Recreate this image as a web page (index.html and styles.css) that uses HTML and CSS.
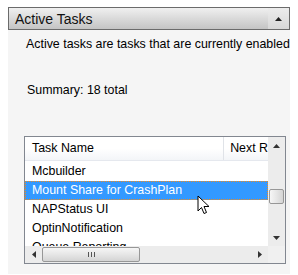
FILE: index.html
```html
<!DOCTYPE html>
<html>
<head>
  <meta charset="UTF-8">
  <title>Active Tasks</title>
  <link rel="stylesheet" href="styles.css">
</head>
<body>
  <div class="pane">
    <div class="pane-header">
      <span class="pane-title">Active Tasks</span>
      <span class="collapse">
        <svg width="7" height="4" viewBox="0 0 7 4"><path d="M0 4 L3.5 0 L7 4 Z" fill="#222"/></svg>
      </span>
    </div>
    <div class="pane-body">
      <p class="desc">Active tasks are tasks that are currently enabled</p>
      <p class="summary">Summary: 18 total</p>

      <div class="listview">
        <div class="list-main">
          <div class="list-area">
            <div class="col-header">
              <div class="col col-name">Task Name</div>
              <div class="col col-next">Next R</div>
            </div>
            <div class="rows">
              <div class="row">Mcbuilder</div>
              <div class="row selected">Mount Share for CrashPlan</div>
              <div class="row">NAPStatus UI</div>
              <div class="row">OptinNotification</div>
              <div class="row">Queue Reporting</div>
            </div>
          </div>
          <div class="vscroll">
            <div class="arrow">
              <svg width="7" height="4" viewBox="0 0 7 4"><path d="M0 4 L3.5 0 L7 4 Z" fill="#333"/></svg>
            </div>
            <div class="vtrack">
              <div class="vthumb"></div>
            </div>
            <div class="arrow">
              <svg width="7" height="4" viewBox="0 0 7 4"><path d="M0 0 L3.5 4 L7 0 Z" fill="#333"/></svg>
            </div>
          </div>
        </div>
        <div class="hscroll">
          <div class="harrow">
            <svg width="4" height="7" viewBox="0 0 4 7"><path d="M4 0 L0 3.5 L4 7 Z" fill="#333"/></svg>
          </div>
          <div class="htrack">
            <div class="hthumb"><span class="grip"></span></div>
          </div>
          <div class="harrow">
            <svg width="4" height="7" viewBox="0 0 4 7"><path d="M0 0 L4 3.5 L0 7 Z" fill="#333"/></svg>
          </div>
          <div class="corner"></div>
        </div>
      </div>
    </div>
  </div>

  <svg class="cursor" width="14" height="21" viewBox="0 0 14 21">
    <path d="M1 1 L1 16 L4.5 12.5 L7 18.5 L9.5 17.5 L7 11.5 L12 11.5 Z" fill="#fff" stroke="#000" stroke-width="1" stroke-linejoin="miter"/>
  </svg>
</body>
</html>
```

FILE: styles.css
```css
body {
  margin: 0;
  background-color: #fff;
  font-family: "Liberation Sans", Arial, sans-serif;
  font-size: 12.4px;
  color: #000;
}
.pane {
  margin: 7px 8px 0 8px;
  width: 282px;
}
.pane-header {
  height: 21px;
  border: 1px solid #6b6b6b;
  background: linear-gradient(to bottom, #f0f0f0 0%, #dcdcdc 45%, #c4c4c4 100%);
  display: flex;
  align-items: center;
  justify-content: space-between;
}
.pane-title {
  padding-left: 6px;
  font-size: 14px;
  color: #111;
}
.collapse {
  width: 21px;
  height: 21px;
  display: flex;
  align-items: center;
  justify-content: center;
  background: linear-gradient(to bottom, #ececec 0%, #d8d8d8 100%);
}
.pane-body {
  background-color: #f5f5f5;
  padding: 6px 5px 2px 16px;
  height: 236px;
}
.desc {
  margin: 0;
  padding-left: 2px;
  line-height: 17px;
  white-space: nowrap;
}
.summary {
  margin: 29px 0 0 0;
  padding-left: 3px;
  line-height: 17px;
}
.listview {
  margin-top: 37px;
  width: 260px;
  border: 1px solid #828790;
  background-color: #fff;
}
.list-main {
  display: flex;
  height: 109px;
}
.list-area {
  flex: 1;
  overflow: hidden;
}
.col-header {
  display: flex;
  height: 23px;
  background: linear-gradient(to bottom, #fff 0%, #fff 50%, #f3f5f8 100%);
  border-bottom: 1px solid #e5e8ee;
}
.col {
  line-height: 23px;
  white-space: nowrap;
}
.col-name {
  width: 194px;
  padding-left: 7px;
  border-right: 1px solid #e0e3e8;
}
.col-next {
  padding-left: 6px;
}
.rows {
  padding-top: 1px;
}
.row {
  height: 19px;
  line-height: 19px;
  padding-left: 7px;
  white-space: nowrap;
  box-sizing: border-box;
}
.row.selected {
  background-color: #3399ff;
  color: #fff;
  border: 1px dotted #f08a1c;
  padding-left: 6px;
  line-height: 17px;
  width: 243px;
}
.vscroll {
  width: 17px;
  background-color: #ececec;
  display: flex;
  flex-direction: column;
}
.arrow {
  height: 17px;
  display: flex;
  align-items: center;
  justify-content: center;
}
.vtrack {
  flex: 1;
  padding-top: 35px;
}
.vthumb {
  margin: 0 1px;
  height: 13px;
  border: 1px solid #979797;
  border-radius: 2px;
  background: linear-gradient(to right, #f6f6f6 0%, #e6e6e6 50%, #d4d4d4 100%);
}
.hscroll {
  display: flex;
  height: 17px;
  background-color: #ececec;
}
.harrow {
  width: 17px;
  display: flex;
  align-items: center;
  justify-content: center;
}
.htrack {
  flex: 1;
  padding-top: 1px;
}
.hthumb {
  width: 96px;
  height: 13px;
  border: 1px solid #979797;
  border-radius: 2px;
  background: linear-gradient(to bottom, #f6f6f6 0%, #e6e6e6 50%, #d4d4d4 100%);
  display: flex;
  align-items: center;
  justify-content: center;
}
.grip {
  width: 7px;
  height: 5px;
  background: repeating-linear-gradient(to right, #555 0, #555 1px, transparent 1px, transparent 3px);
}
.corner {
  width: 17px;
  background-color: #f0f0f0;
}
.cursor {
  position: absolute;
  left: 197px;
  top: 195px;
}
```
